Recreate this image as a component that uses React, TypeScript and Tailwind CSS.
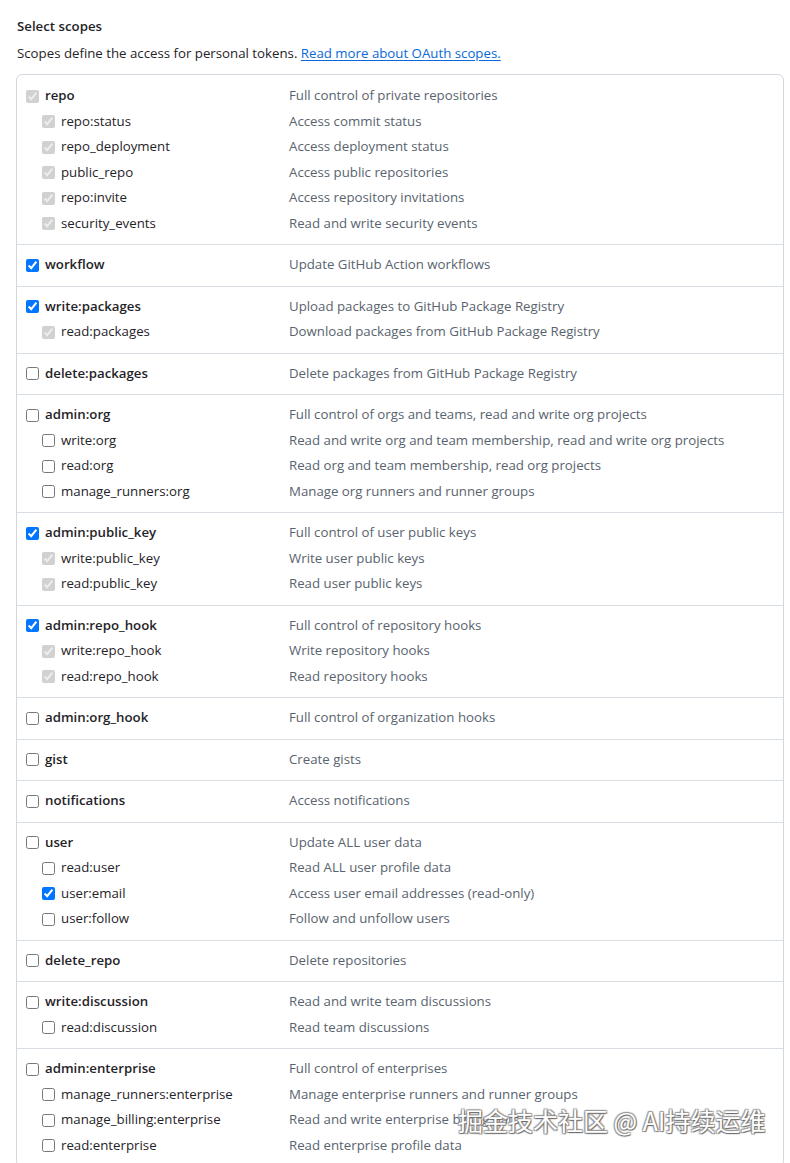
import React from 'react';

type Scope = {
  name: string;
  desc: string;
  state: 'on' | 'off' | 'implied';
  children?: Scope[];
};

const scopes: Scope[] = [
  {
    name: 'repo', desc: 'Full control of private repositories', state: 'implied',
    children: [
      { name: 'repo:status', desc: 'Access commit status', state: 'implied' },
      { name: 'repo_deployment', desc: 'Access deployment status', state: 'implied' },
      { name: 'public_repo', desc: 'Access public repositories', state: 'implied' },
      { name: 'repo:invite', desc: 'Access repository invitations', state: 'implied' },
      { name: 'security_events', desc: 'Read and write security events', state: 'implied' },
    ],
  },
  { name: 'workflow', desc: 'Update GitHub Action workflows', state: 'on' },
  {
    name: 'write:packages', desc: 'Upload packages to GitHub Package Registry', state: 'on',
    children: [{ name: 'read:packages', desc: 'Download packages from GitHub Package Registry', state: 'implied' }],
  },
  { name: 'delete:packages', desc: 'Delete packages from GitHub Package Registry', state: 'off' },
  {
    name: 'admin:org', desc: 'Full control of orgs and teams, read and write org projects', state: 'off',
    children: [
      { name: 'write:org', desc: 'Read and write org and team membership, read and write org projects', state: 'off' },
      { name: 'read:org', desc: 'Read org and team membership, read org projects', state: 'off' },
      { name: 'manage_runners:org', desc: 'Manage org runners and runner groups', state: 'off' },
    ],
  },
  {
    name: 'admin:public_key', desc: 'Full control of user public keys', state: 'on',
    children: [
      { name: 'write:public_key', desc: 'Write user public keys', state: 'implied' },
      { name: 'read:public_key', desc: 'Read user public keys', state: 'implied' },
    ],
  },
  {
    name: 'admin:repo_hook', desc: 'Full control of repository hooks', state: 'on',
    children: [
      { name: 'write:repo_hook', desc: 'Write repository hooks', state: 'implied' },
      { name: 'read:repo_hook', desc: 'Read repository hooks', state: 'implied' },
    ],
  },
  { name: 'admin:org_hook', desc: 'Full control of organization hooks', state: 'off' },
  { name: 'gist', desc: 'Create gists', state: 'off' },
  { name: 'notifications', desc: 'Access notifications', state: 'off' },
  {
    name: 'user', desc: 'Update ALL user data', state: 'off',
    children: [
      { name: 'read:user', desc: 'Read ALL user profile data', state: 'off' },
      { name: 'user:email', desc: 'Access user email addresses (read-only)', state: 'on' },
      { name: 'user:follow', desc: 'Follow and unfollow users', state: 'off' },
    ],
  },
  { name: 'delete_repo', desc: 'Delete repositories', state: 'off' },
  {
    name: 'write:discussion', desc: 'Read and write team discussions', state: 'off',
    children: [{ name: 'read:discussion', desc: 'Read team discussions', state: 'off' }],
  },
  {
    name: 'admin:enterprise', desc: 'Full control of enterprises', state: 'off',
    children: [
      { name: 'manage_runners:enterprise', desc: 'Manage enterprise runners and runner groups', state: 'off' },
      { name: 'manage_billing:enterprise', desc: 'Read and write enterprise billing data', state: 'off' },
      { name: 'read:enterprise', desc: 'Read enterprise profile data', state: 'off' },
    ],
  },
];

const Row = ({ scope, child }: { scope: Scope; child?: boolean }) => (
  <div className="flex items-center h-[25.5px]">
    <label className={`flex items-center w-[272px] shrink-0 ${child ? 'pl-[25px]' : 'pl-[9px]'}`}>
      <input
        type="checkbox"
        readOnly
        checked={scope.state !== 'off'}
        disabled={scope.state === 'implied'}
        className="m-0 w-[13px] h-[13px]"
      />
      <span className={`ml-[6px] text-[#1f2328] ${child ? 'font-normal' : 'font-semibold'}`}>{scope.name}</span>
    </label>
    <span className="text-[#59636e]">{scope.desc}</span>
  </div>
);

export default function App() {
  return (
    <div
      className="relative w-[790px] h-[1163px] overflow-hidden bg-white pl-4 pt-[16px] text-[13.25px]"
      style={{ fontFamily: '"Open Sans", "Noto Sans", sans-serif' }}
    >
      <h3 className="pl-px font-semibold text-[#1f2328] leading-5">Select scopes</h3>
      <p className="mt-[7px] pl-px text-[#1f2328] leading-5">
        Scopes define the access for personal tokens.{' '}
        <a className="text-[#0969da] underline underline-offset-2">Read more about OAuth scopes.</a>
      </p>
      <div className="mt-[11px] w-[768px] rounded-md border border-[#d0d7de]">
        {scopes.map((s, i) => (
          <div key={s.name} className={`py-[7.5px] ${i > 0 ? 'border-t border-[#d8dee4]' : 'pt-[8.5px]'}`}>
            <Row scope={s} />
            {s.children?.map(c => <Row key={c.name} scope={c} child />)}
          </div>
        ))}
      </div>

      <div
        className="absolute left-[458px] top-[1104px] whitespace-nowrap text-[25px] leading-8 text-white"
        style={{
          fontFamily: '"Noto Sans CJK SC", sans-serif',
          textShadow: '1px 1px 1px #6b6b6b, -1px -1px 1px #9a9a9a, 1px -1px 1px #9a9a9a, -1px 1px 1px #9a9a9a',
        }}
      >
        掘金技术社区 @ AI持续运维
      </div>
    </div>
  );
}
